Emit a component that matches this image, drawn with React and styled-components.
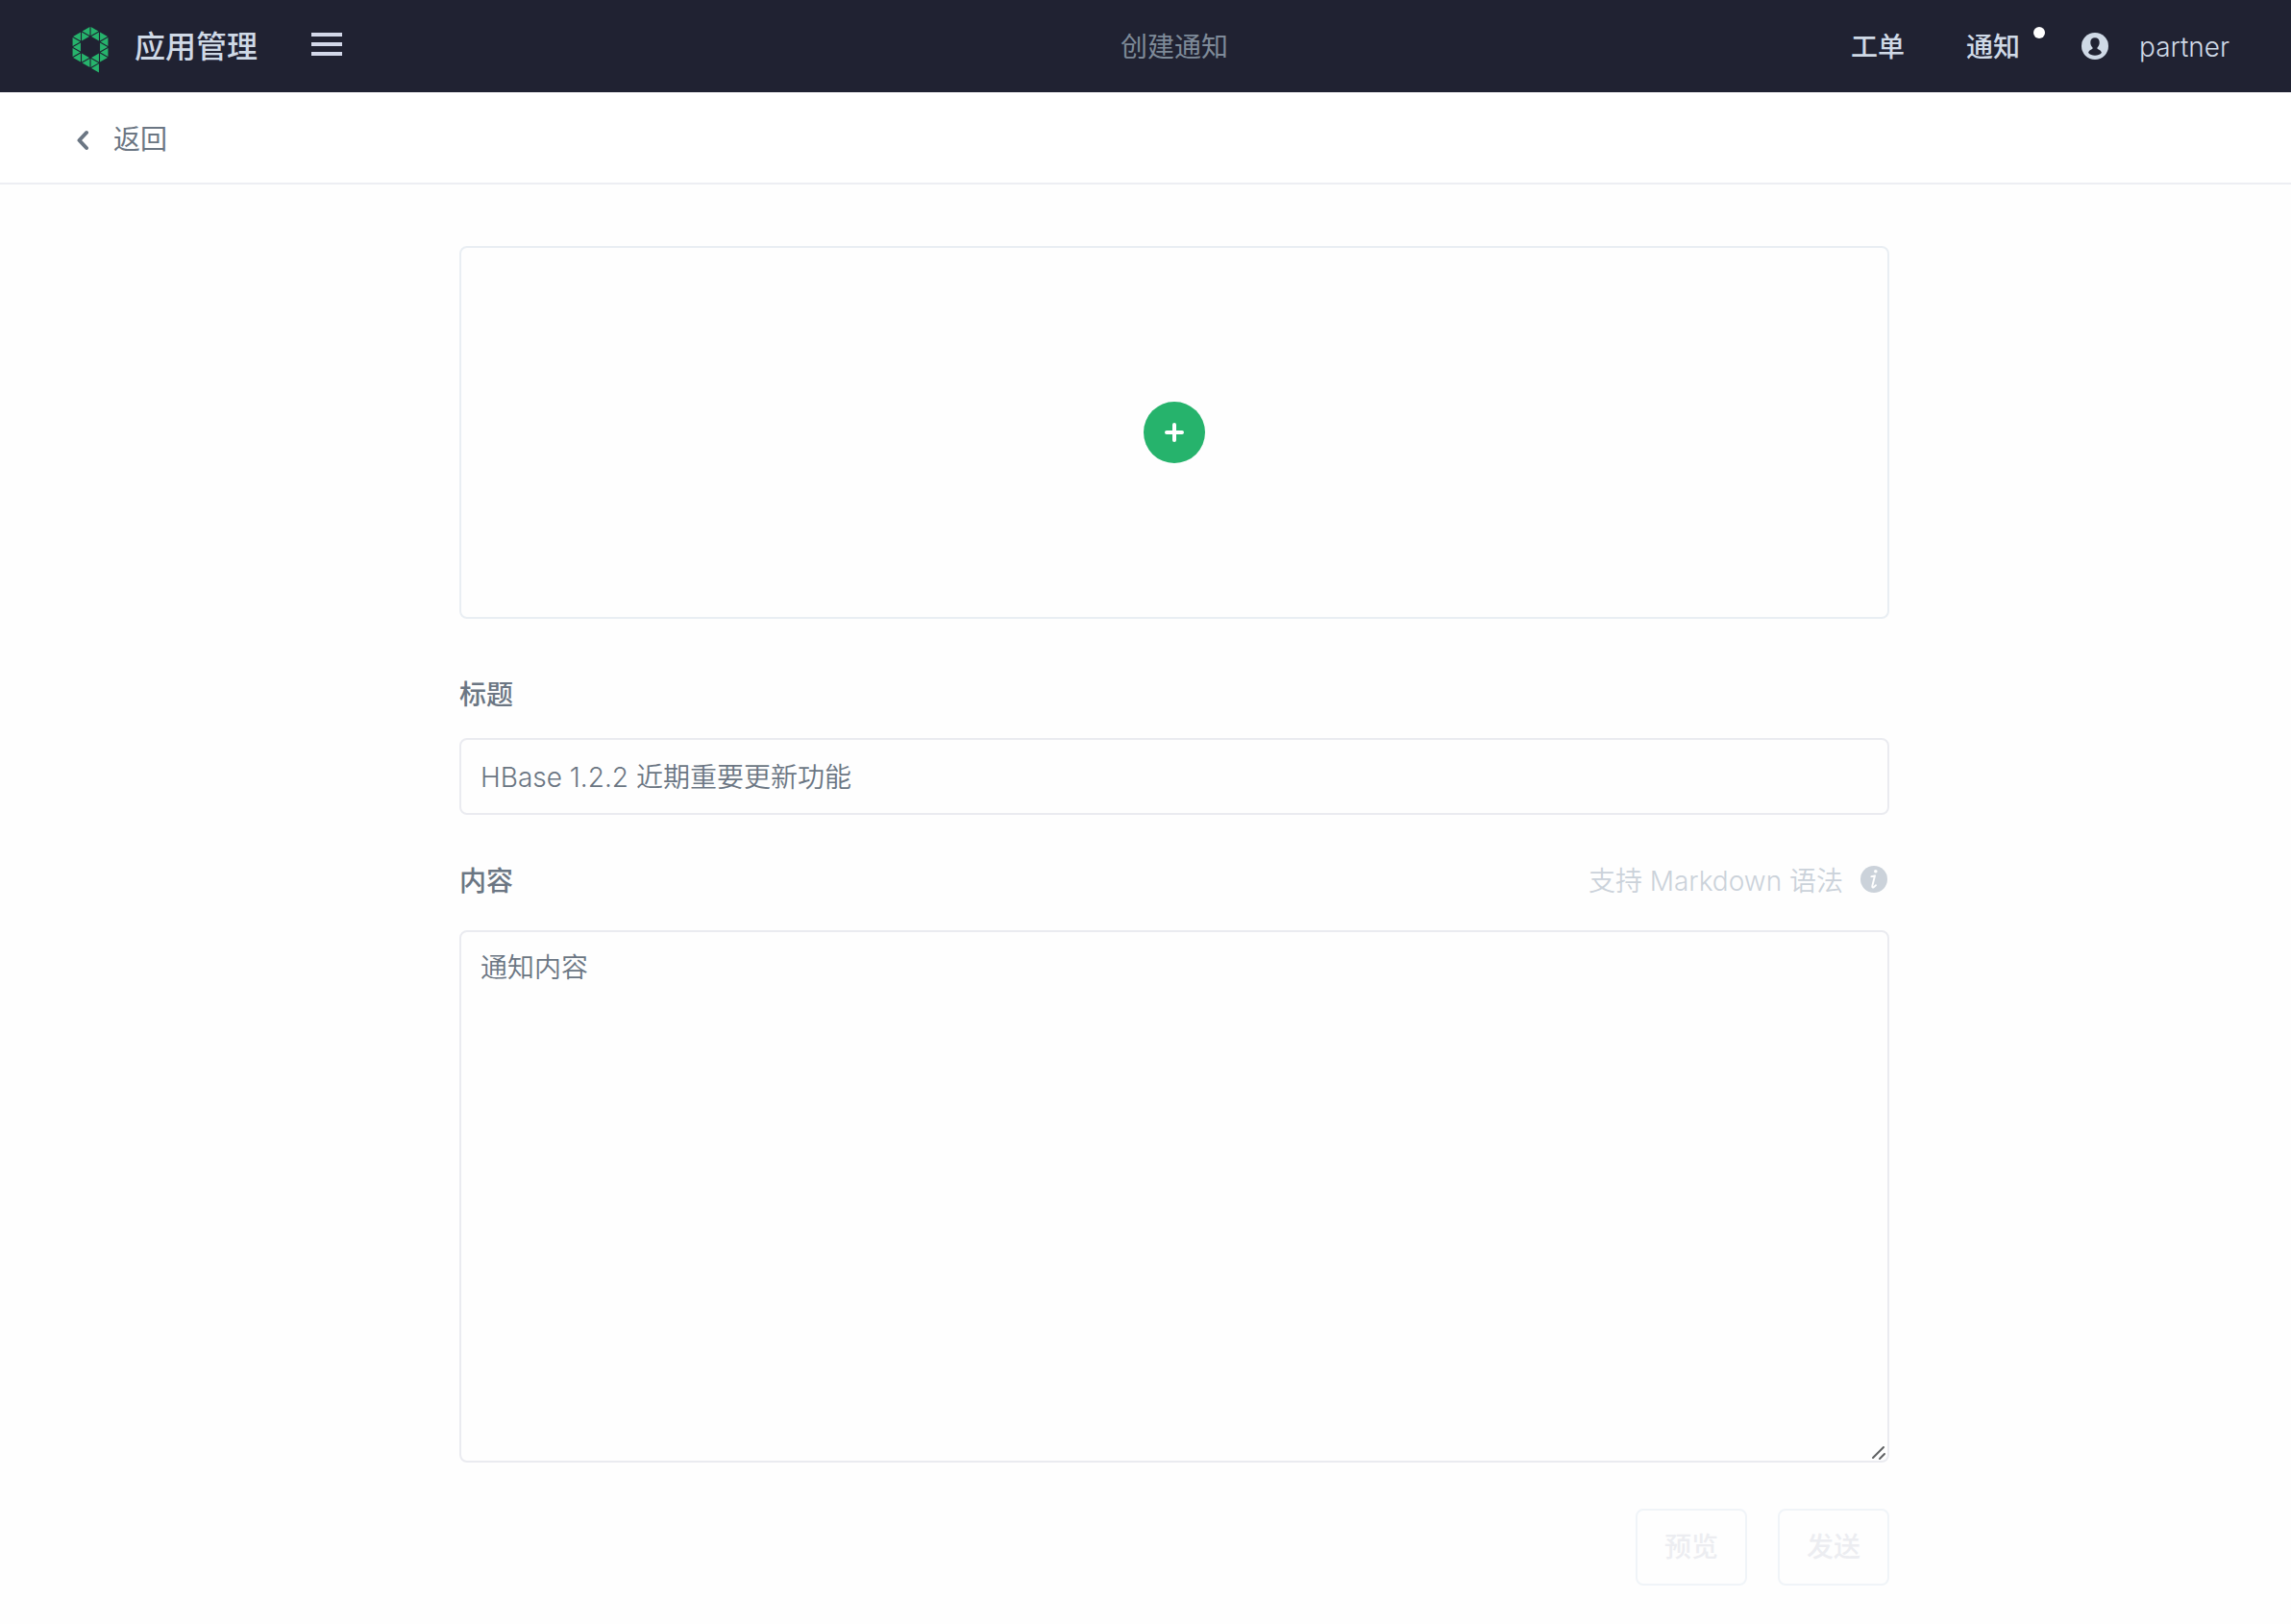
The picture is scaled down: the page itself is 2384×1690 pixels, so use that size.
import React from "react";
import styled, { createGlobalStyle } from "styled-components";

const GlobalStyle = createGlobalStyle`
  *, *::before, *::after { box-sizing: border-box; }
  body {
    margin: 0;
    background: #fefefe;
    color: #6b7683;
    font-family: Inter, "Noto Sans CJK SC", sans-serif;
    font-size: 28px;
    line-height: 40px;
  }
  svg { display: block; flex: none; }
`;

const Page = styled.div`
  display: flex;
  flex-direction: column;
  min-height: 1690px;
`;

const Header = styled.header`
  display: grid;
  grid-template-columns: 1166px 112px 1fr;
  align-items: center;
  height: 96px;
  background: #202232;
  color: #cfd9e6;
`;

const Brand = styled.div`
  display: flex;
  align-items: center;
  padding-left: 74px;
`;

const LogoMark = styled.svg`
  margin-top: 8px;
`;

const BrandName = styled.span`
  margin: 2px 56px 0 26px;
  font-size: 32px;
  font-weight: 500;
  white-space: nowrap;
`;

const MenuButton = styled.button`
  display: flex;
  flex-direction: column;
  gap: 6px;
  width: 32px;
  margin: 0 0 4px;
  padding: 0;
  border: 0;
  background: none;
`;

const MenuBar = styled.span`
  height: 4px;
  background: #d3d8e9;
`;

const PageTitle = styled.h1`
  margin: 0;
  padding-top: 2px;
  color: #7e8a98;
  font-size: 28px;
  font-weight: 400;
  white-space: nowrap;
`;

const Nav = styled.nav`
  display: flex;
  align-items: center;
  justify-content: flex-end;
  padding-right: 63px;
`;

const NavLink = styled.a`
  position: relative;
  margin: 2px 64px 0 0;
  font-weight: 500;
  white-space: nowrap;
`;

const UnreadDot = styled.i`
  position: absolute;
  top: -1px;
  right: -26px;
  width: 12px;
  height: 12px;
  border-radius: 50%;
  background: #fff;
`;

const UserName = styled.span`
  width: 95px;
  margin: 1px 0 0 32px;
  font-weight: 300;
  white-space: nowrap;
`;

const BackBar = styled.div`
  display: flex;
  align-items: center;
  gap: 26px;
  height: 96px;
  padding: 4px 0 0 80px;
  border-bottom: 2px solid #edeef3;
  background: #fff;
`;

const BackArrow = styled.svg`
  margin-top: 2px;
`;

const Form = styled.main`
  display: flex;
  flex-direction: column;
  width: 1488px;
  margin: 64px 0 0 478px;
`;

const Upload = styled.div`
  display: flex;
  align-items: center;
  justify-content: center;
  height: 388px;
  border: 2px solid #e9eef3;
  border-radius: 8px;
`;

const AddButton = styled.button`
  display: grid;
  place-items: center;
  width: 64px;
  height: 64px;
  padding: 0;
  border: 0;
  border-radius: 50%;
  background: #26b36c;
`;

const LabelRow = styled.div`
  display: flex;
  align-items: center;
  justify-content: space-between;
  height: 40px;
  margin: ${(p) => p.$margin};
`;

const Label = styled.label`
  font-weight: 500;
`;

const Hint = styled.div`
  display: flex;
  align-items: center;
  gap: 18px;
  padding-right: 2px;
  color: #cbd2da;
  font-weight: 350;
  white-space: nowrap;
`;

const InfoMark = styled.svg`
  margin-bottom: 4px;
`;

const fieldStyles = `
  display: block;
  width: 100%;
  border: 2px solid #eaebf0;
  border-radius: 8px;
  outline: 0;
  background: #fefefe;
  color: #6b7683;
  font: inherit;
  font-weight: 350;
`;

const TextInput = styled.input`
  ${fieldStyles}
  height: 80px;
  padding: 0 20px 2px;
`;

const TextAreaWrap = styled.div`
  position: relative;
  height: 554px;
`;

const TextArea = styled.textarea`
  ${fieldStyles}
  height: 554px;
  padding: 17px 20px;
  resize: none;
`;

const ResizeGrip = styled.svg`
  position: absolute;
  right: 2px;
  bottom: 2px;
`;

const Actions = styled.div`
  display: flex;
  justify-content: flex-end;
  gap: 32px;
  margin-top: 48px;
`;

const ActionButton = styled.button`
  width: 116px;
  height: 80px;
  padding: 0;
  border: 2px solid #f0f4f8;
  border-radius: 8px;
  background: #fefefe;
  color: #ecedf1;
  font: inherit;
  font-weight: 500;
`;

const SIDE = 10.95;
const COL = 9.5;

// Triangles of a pointy-top hexagonal ring, plus the tail of the Q.
function logoTriangles() {
  const out = [];
  for (let c = -2; c < 2; c++) {
    for (const [edge, tip] of [[c, c + 1], [c + 1, c]]) {
      const limit = 2 - Math.abs(edge) / 2;
      for (let y = -limit; y < limit; y++) {
        const mid = y + 0.5;
        if (Math.abs(mid) > 2 - Math.abs(tip) / 2) continue;
        const inHole =
          Math.abs(edge) < 2 &&
          Math.abs(tip) < 2 &&
          Math.max(Math.abs(y), Math.abs(y + 1)) <= 1 - Math.abs(edge) / 2 &&
          Math.abs(mid) <= 1 - Math.abs(tip) / 2;
        if (!inHole) out.push([edge, y, tip]);
      }
    }
  }
  out.push([1, 1.5, 0]);
  return out.map(([edge, y, tip]) => {
    const pts = [[edge, y], [edge, y + 1], [tip, y + 0.5]].map(([a, b]) => [a * COL + 20, b * SIDE + 22]);
    const cx = (pts[0][0] + pts[1][0] + pts[2][0]) / 3;
    const cy = (pts[0][1] + pts[1][1] + pts[2][1]) / 3;
    return pts
      .map(([px, py]) => `${(cx + (px - cx) * 0.83).toFixed(2)},${(cy + (py - cy) * 0.83).toFixed(2)}`)
      .join(" ");
  });
}

const Logo = () => (
  <LogoMark width="40" height="50" viewBox="0 0 40 50" fill="#26b36c">
    {logoTriangles().map((points) => (
      <polygon key={points} points={points} />
    ))}
  </LogoMark>
);

const UserIcon = () => (
  <svg width="28" height="28" viewBox="0 0 28 28">
    <circle cx="14" cy="14" r="14" fill="#cfd9e6" />
    <path
      d="M14 5.2c-3 0-4.700 2-4.700 4.800 0 2.400.8 4 2 5.200.5.500.5 1.300-.2 1.700-1.700.900-3.900 1.800-4 4.200 1.600 1.800 4 2.600 6.900 2.600s5.300-.8 6.900-2.600c-.1-2.400-2.300-3.300-4-4.200-.7-.4-.7-1.200-.2-1.700 1.200-1.200 2-2.800 2-5.200 0-2.800-1.700-4.800-4.700-4.800z"
      fill="#202232"
    />
  </svg>
);

const InfoIcon = () => (
  <InfoMark width="28" height="28" viewBox="0 0 28 28">
    <circle cx="14" cy="14" r="14" fill="#cbd2da" />
    <circle cx="15.8" cy="5.7" r="1.8" fill="#fefefe" />
    <path
      d="M11.300 11.200 15 10.300 12.400 20.400C12 22.200 12.400 22.900 13.600 22.300 14.700 21.800 15.400 20.900 16 20.200"
      fill="none"
      stroke="#fefefe"
      strokeWidth="1.900"
      strokeLinecap="round"
      strokeLinejoin="round"
    />
  </InfoMark>
);

export default function App() {
  return (
    <>
      <GlobalStyle />
      <Page>
        <Header>
          <Brand>
            <Logo />
            <BrandName>应用管理</BrandName>
            <MenuButton aria-label="菜单">
              <MenuBar />
              <MenuBar />
              <MenuBar />
            </MenuButton>
          </Brand>
          <PageTitle>创建通知</PageTitle>
          <Nav>
            <NavLink>工单</NavLink>
            <NavLink>
              通知
              <UnreadDot />
            </NavLink>
            <UserIcon />
            <UserName>partner</UserName>
          </Nav>
        </Header>
        <BackBar>
          <BackArrow width="12" height="22" viewBox="0 0 12 22">
            <path d="M10 3 2.500 11 10 19" fill="none" stroke="#6b7683" strokeWidth="4" strokeLinecap="round" strokeLinejoin="round" />
          </BackArrow>
          <span>返回</span>
        </BackBar>
        <Form>
          <Upload>
            <AddButton aria-label="添加">
              <svg width="20" height="20" viewBox="0 0 20 20">
                <path d="M10 2v16M2 10h16" stroke="#fff" strokeWidth="4" strokeLinecap="round" />
              </svg>
            </AddButton>
          </Upload>
          <LabelRow $margin="59px 0 25px">
            <Label htmlFor="title">标题</Label>
          </LabelRow>
          <TextInput id="title" defaultValue="HBase 1.2.2 近期重要更新功能" />
          <LabelRow $margin="49px 0 31px">
            <Label htmlFor="content">内容</Label>
            <Hint>
              <span>支持 Markdown 语法</span>
              <InfoIcon />
            </Hint>
          </LabelRow>
          <TextAreaWrap>
            <TextArea id="content" defaultValue="通知内容" spellCheck={false} />
            <ResizeGrip width="18" height="18" viewBox="0 0 18 18">
              <path d="M3 15 14 4M10 16l5-5" stroke="#5f6163" strokeWidth="2" strokeLinecap="round" />
            </ResizeGrip>
          </TextAreaWrap>
          <Actions>
            <ActionButton>预览</ActionButton>
            <ActionButton>发送</ActionButton>
          </Actions>
        </Form>
      </Page>
    </>
  );
}
